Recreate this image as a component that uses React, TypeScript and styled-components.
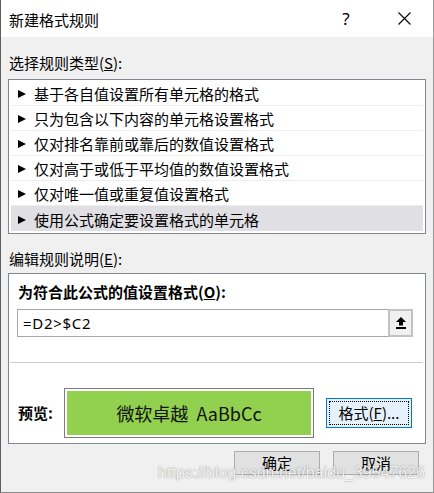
import React from "react";
import styled, { createGlobalStyle } from "styled-components";

const GlobalStyle = createGlobalStyle`
  html, body { margin: 0; padding: 0; background: #ffffff; }
  body { font-family: "Noto Sans CJK SC", "Noto Sans", sans-serif; color: #000; }
  * { box-sizing: border-box; }
`;

const CJK = `"Noto Sans CJK SC", "Noto Sans", sans-serif`;

const Window = styled.div`
  position: relative;
  width: 434px;
  height: 493px;
  display: flex;
  flex-direction: column;
  border-left: 1px solid #5e5e5e;
  border-right: 1px solid #9a9a9a;
  border-bottom: 1px solid #8a8a8a;
  background: #f0f0f0;
  overflow: hidden;
`;

const TitleBar = styled.div`
  height: 37px;
  flex: none;
  display: flex;
  align-items: center;
  background: #ffffff;
`;

const Title = styled.div`
  flex: 1;
  padding-left: 8px;
  padding-top: 2px;
  font-family: ${CJK};
  font-size: 15px;
  line-height: 20px;
`;

const CaptionButton = styled.div`
  width: 58px;
  height: 37px;
  display: flex;
  align-items: center;
  justify-content: center;
  font-family: "Noto Sans", sans-serif;
  font-size: 17px;
  line-height: 20px;
`;

const Body = styled.div`
  flex: 1;
  display: flex;
  flex-direction: column;
  padding: 0 7px;
`;

const SectionLabel = styled.div<{ $top: number; $bottom: number }>`
  margin-top: ${(p) => p.$top}px;
  margin-bottom: ${(p) => p.$bottom}px;
  padding-left: 1px;
  font-family: ${CJK};
  font-size: 15px;
  line-height: 20px;
`;

const RuleList = styled.div`
  border: 1px solid #828790;
  background: #ffffff;
  padding: 1px 2px 2px 2px;
  display: flex;
  flex-direction: column;
`;

const RuleRow = styled.div<{ $selected?: boolean; $last?: boolean }>`
  height: 25px;
  display: flex;
  align-items: center;
  padding-top: 2px;
  background: ${(p) => (p.$selected ? "#e0dfe3" : "transparent")};
  border-bottom: ${(p) => (p.$last ? "none" : "1px solid #eeeeee")};
  font-family: ${CJK};
  font-size: 15px;
  line-height: 20px;
`;

const Arrow = styled.span`
  width: 0;
  height: 0;
  margin-left: 7px;
  margin-right: 8px;
  border-style: solid;
  border-width: 4px 0 4px 8px;
  border-color: transparent transparent transparent #000;
`;

const EditPanel = styled.div`
  border: 1px solid #828790;
  background: #ffffff;
  padding: 8px 12px 5px 8px;
  display: flex;
  flex-direction: column;
`;

const BoldLabel = styled.div<{ $width?: number }>`
  font-family: ${CJK};
  font-weight: 700;
  font-size: 15px;
  line-height: 20px;
  padding-left: 1px;
  flex: none;
  width: ${(p) => (p.$width ? `${p.$width}px` : "auto")};
`;

const FormulaField = styled.div`
  margin-top: 7px;
  height: 28px;
  display: flex;
  border: 1px solid #a8a8a8;
`;

const FormulaText = styled.div`
  flex: 1;
  padding-left: 5px;
  display: flex;
  align-items: center;
  font-family: "Noto Sans", sans-serif;
  font-size: 15px;
  letter-spacing: 0.7px;
`;

const CollapseButton = styled.div`
  width: 25px;
  margin: -1px -1px -1px 0;
  border: 2px solid #c2c2c2;
  background: #f0f0f0;
  display: flex;
  align-items: center;
  justify-content: center;
`;

const Divider = styled.div`
  margin: 25px -10px 0 -7px;
  height: 1px;
  background: #cdcdcd;
`;

const PreviewRow = styled.div`
  margin-top: 25px;
  height: 50px;
  display: flex;
  align-items: center;
`;

const PreviewFrame = styled.div`
  width: 250px;
  height: 50px;
  border: 1px solid #7a7a7a;
  padding: 2px;
  display: flex;
`;

const PreviewFill = styled.div`
  flex: 1;
  background: #92d050;
  display: flex;
  align-items: center;
  justify-content: center;
  font-family: ${CJK};
  font-size: 18px;
  line-height: 22px;
  color: #111;
  white-space: pre;
`;

const FormatButton = styled.div`
  margin-left: 12px;
  width: 86px;
  height: 30px;
  border: 1px solid #0078d7;
  background: #e5f1fb;
  padding: 2px;
  display: flex;
`;

const FocusRing = styled.div`
  flex: 1;
  border: 1px dotted #000;
  display: flex;
  align-items: center;
  justify-content: center;
  font-family: ${CJK};
  font-size: 15px;
  line-height: 20px;
`;

const ButtonRow = styled.div`
  margin-top: 7px;
  padding-right: 7px;
  display: flex;
  justify-content: flex-end;
  gap: 13px;
`;

const DialogButton = styled.div`
  width: 86px;
  height: 24px;
  border: 1px solid #adadad;
  background: #e1e1e1;
  display: flex;
  align-items: center;
  justify-content: center;
  font-family: ${CJK};
  font-size: 15px;
  line-height: 20px;
`;

const Watermark = styled.div`
  position: absolute;
  left: 157px;
  top: 464px;
  font-family: "Liberation Sans", Arial, sans-serif;
  font-size: 16px;
  line-height: 18px;
  color: rgba(255, 255, 255, 0.92);
  text-shadow: 0 0 1px rgba(0, 0, 0, 0.35), 0 0 2px rgba(0, 0, 0, 0.2);
  pointer-events: none;
  white-space: nowrap;
`;

const rules = [
  "基于各自值设置所有单元格的格式",
  "只为包含以下内容的单元格设置格式",
  "仅对排名靠前或靠后的数值设置格式",
  "仅对高于或低于平均值的数值设置格式",
  "仅对唯一值或重复值设置格式",
  "使用公式确定要设置格式的单元格",
];

export default function App() {
  return (
    <>
      <GlobalStyle />
      <Window>
        <TitleBar>
          <Title>新建格式规则</Title>
          <CaptionButton>?</CaptionButton>
          <CaptionButton>
            <svg width="13" height="13" viewBox="0 0 13 13">
              <path d="M0.5 0.5 L12.5 12.5 M12.5 0.5 L0.5 12.5" stroke="#000" strokeWidth="1.1" fill="none" />
            </svg>
          </CaptionButton>
        </TitleBar>
        <Body>
          <SectionLabel $top={16} $bottom={6}>
            选择规则类型(<u>S</u>):
          </SectionLabel>
          <RuleList>
            {rules.map((r, i) => (
              <RuleRow key={r} $selected={i === rules.length - 1} $last={i === rules.length - 1}>
                <Arrow />
                {r}
              </RuleRow>
            ))}
          </RuleList>
          <SectionLabel $top={15} $bottom={4}>
            编辑规则说明(<u>E</u>):
          </SectionLabel>
          <EditPanel>
            <BoldLabel>
              为符合此公式的值设置格式(<u>O</u>):
            </BoldLabel>
            <FormulaField>
              <FormulaText>=D2&gt;$C2</FormulaText>
              <CollapseButton>
                <svg width="10" height="12" viewBox="0 0 10 12">
                  <polygon points="5,0 10,5 0,5" fill="#000" />
                  <rect x="3" y="5" width="4" height="3.5" fill="#000" />
                  <rect x="0" y="10" width="10" height="2" fill="#000" />
                </svg>
              </CollapseButton>
            </FormulaField>
            <Divider />
            <PreviewRow>
              <BoldLabel $width={47}>预览:</BoldLabel>
              <PreviewFrame>
                <PreviewFill>{"微软卓越  AaBbCc"}</PreviewFill>
              </PreviewFrame>
              <FormatButton>
                <FocusRing>
                  格式(<u>F</u>)...
                </FocusRing>
              </FormatButton>
            </PreviewRow>
          </EditPanel>
          <ButtonRow>
            <DialogButton>确定</DialogButton>
            <DialogButton>取消</DialogButton>
          </ButtonRow>
        </Body>
        <Watermark>https://blog.csdn.net/baidu_39547626</Watermark>
      </Window>
    </>
  );
}
